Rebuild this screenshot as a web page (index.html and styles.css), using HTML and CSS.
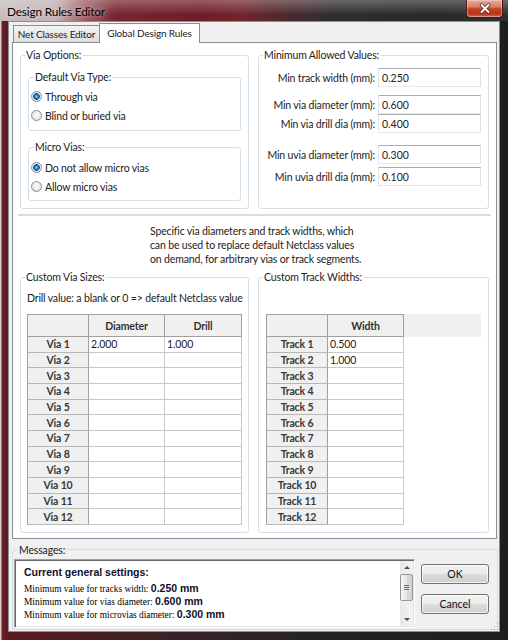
FILE: index.html
```html
<!DOCTYPE html>
<html>
<head>
  <title>Design Rules Editor</title>
  <link rel="stylesheet" href="styles.css">
</head>
<body>
  <div class="window">
    <div class="titlebar">
      <span class="title">Design Rules Editor</span>
      <span class="close">
        <svg width="14" height="11" viewBox="0 0 14 11">
          <path d="M3.5 2 L10.5 9 M10.5 2 L3.5 9" stroke="#5a2418" stroke-width="3.4" stroke-linecap="round"/>
          <path d="M3.5 2 L10.5 9 M10.5 2 L3.5 9" stroke="#fff" stroke-width="1.9" stroke-linecap="round"/>
        </svg>
      </span>
    </div>

    <div class="client">
      <div class="tabs">
        <span class="tab">Net Classes Editor</span>
        <span class="tab active">Global Design Rules</span>
      </div>

      <div class="panel">
        <div class="row">
          <fieldset class="group via-options">
            <legend>Via Options:</legend>
            <fieldset class="group sub default-type">
              <legend>Default Via Type:</legend>
              <div class="radio"><span class="dot checked"></span>Through via</div>
              <div class="radio"><span class="dot"></span>Blind or buried via</div>
            </fieldset>
            <fieldset class="group sub micro">
              <legend>Micro Vias:</legend>
              <div class="radio"><span class="dot checked"></span>Do not allow micro vias</div>
              <div class="radio"><span class="dot"></span>Allow micro vias</div>
            </fieldset>
          </fieldset>

          <fieldset class="group min-values">
            <legend>Minimum Allowed Values:</legend>
            <div class="field f1"><label>Min track width (mm):</label><input type="text" value="0.250"></div>
            <div class="field f2"><label>Min via diameter (mm):</label><input type="text" value="0.600"></div>
            <div class="field f3"><label>Min via drill dia (mm):</label><input type="text" value="0.400"></div>
            <div class="field f4"><label>Min uvia diameter (mm):</label><input type="text" value="0.300"></div>
            <div class="field f5"><label>Min uvia drill dia (mm):</label><input type="text" value="0.100"></div>
          </fieldset>
        </div>

        <div class="separator"></div>

        <p class="note">Specific via diameters and track widths, which<br>can be used to replace default Netclass values<br>on demand, for arbitrary vias or track segments.</p>

        <div class="row bottom">
          <fieldset class="group via-sizes">
            <legend>Custom Via Sizes:</legend>
            <p class="hint">Drill value: a blank or 0 =&gt; default Netclass value</p>
            <table class="grid via-grid">
              <thead>
                <tr><th class="c-label"></th><th class="c-diam">Diameter</th><th class="c-drill">Drill</th></tr>
              </thead>
              <tbody>
                <tr><td class="label">Via 1</td><td>2.000</td><td>1.000</td></tr>
                <tr><td class="label">Via 2</td><td></td><td></td></tr>
                <tr><td class="label">Via 3</td><td></td><td></td></tr>
                <tr><td class="label">Via 4</td><td></td><td></td></tr>
                <tr><td class="label">Via 5</td><td></td><td></td></tr>
                <tr><td class="label">Via 6</td><td></td><td></td></tr>
                <tr><td class="label">Via 7</td><td></td><td></td></tr>
                <tr><td class="label">Via 8</td><td></td><td></td></tr>
                <tr><td class="label">Via 9</td><td></td><td></td></tr>
                <tr><td class="label">Via 10</td><td></td><td></td></tr>
                <tr><td class="label">Via 11</td><td></td><td></td></tr>
                <tr><td class="label">Via 12</td><td></td><td></td></tr>
              </tbody>
            </table>
          </fieldset>

          <fieldset class="group track-widths">
            <legend>Custom Track Widths:</legend>
            <table class="grid track-grid">
              <thead>
                <tr><th class="c-label"></th><th class="c-diam">Width</th><th class="filler"></th></tr>
              </thead>
              <tbody>
                <tr><td class="label">Track 1</td><td>0.500</td><td class="blank"></td></tr>
                <tr><td class="label">Track 2</td><td>1.000</td><td class="blank"></td></tr>
                <tr><td class="label">Track 3</td><td></td><td class="blank"></td></tr>
                <tr><td class="label">Track 4</td><td></td><td class="blank"></td></tr>
                <tr><td class="label">Track 5</td><td></td><td class="blank"></td></tr>
                <tr><td class="label">Track 6</td><td></td><td class="blank"></td></tr>
                <tr><td class="label">Track 7</td><td></td><td class="blank"></td></tr>
                <tr><td class="label">Track 8</td><td></td><td class="blank"></td></tr>
                <tr><td class="label">Track 9</td><td></td><td class="blank"></td></tr>
                <tr><td class="label">Track 10</td><td></td><td class="blank"></td></tr>
                <tr><td class="label">Track 11</td><td></td><td class="blank"></td></tr>
                <tr><td class="label">Track 12</td><td></td><td class="blank"></td></tr>
              </tbody>
            </table>
          </fieldset>
        </div>
      </div>

      <fieldset class="messages">
        <legend>Messages:</legend>
        <div class="msg-row">
          <div class="msg-box">
            <div class="msg-text">
              <p class="msg-head">Current general settings:</p>
              <p class="msg-line">Minimum value for tracks width: <b>0.250 mm</b></p>
              <p class="msg-line">Minimum value for vias diameter: <b>0.600 mm</b></p>
              <p class="msg-line">Minimum value for microvias diameter: <b>0.300 mm</b></p>
            </div>
            <div class="scrollbar">
              <span class="arrow up"></span>
              <span class="thumb"><i></i><i></i><i></i></span>
              <span class="arrow down"></span>
            </div>
          </div>
          <div class="buttons">
            <button class="btn">OK</button>
            <button class="btn">Cancel</button>
          </div>
        </div>
      </fieldset>
      <span class="grip"></span>
    </div>
  </div>
</body>
</html>
```

FILE: styles.css
```css
* {
  box-sizing: border-box;
}
body {
  margin: 0;
  font-family: Lato, "Open Sans", sans-serif;
  font-size: 10.5px;
  letter-spacing: -0.15px;
  color: #222;
}
p {
  margin: 0;
}

/* window frame */
.window {
  width: 508px;
  height: 640px;
  display: flex;
  flex-direction: column;
  background: linear-gradient(to right, #d8cdce 0, #d8cdce 1px, #6e1f26 2px, #5a1a20 8px, #3c2225 150px, #242325 320px, #1d1e20 508px);
}
.titlebar {
  height: 21px;
  flex: none;
  display: flex;
  justify-content: space-between;
  align-items: flex-start;
  padding-left: 7px;
  background:
    linear-gradient(to bottom, rgba(255,255,255,.28), rgba(255,255,255,0) 70%),
    linear-gradient(to right, #c9bcbe 0, #c2b0b2 55px, #9c5a60 85px, #76262e 115px, #6e1e26 200px, #73252b 240px, #4c2a2e 285px, #2f2e30 335px, #27292b 440px, #2e3134 508px);
}
.title {
  font-size: 11.8px;
  line-height: 24px;
  color: #000;
  text-shadow: 0 0 5px rgba(255,255,255,.8);
}
.close {
  width: 37px;
  height: 18px;
  margin-right: 5px;
  display: flex;
  justify-content: center;
  align-items: center;
  border: 1px solid #4a1c14;
  border-top: 0;
  border-radius: 0 0 4px 4px;
  background: linear-gradient(#eaa99b 0, #d98068 40%, #c4401f 52%, #b8361a 80%, #d46650 100%);
  box-shadow: inset 0 0 0 1px rgba(255,255,255,.35);
}

.client {
  flex: 1;
  margin: 0 8px 8px;
  border: 1px solid #8a8f96;
  background: #f0f0f0;
  display: flex;
  flex-direction: column;
  position: relative;
}

/* tabs */
.tabs {
  height: 20px;
  flex: none;
  display: flex;
  align-items: flex-end;
  padding: 1px 0 0 4px;
  font-size: 10px;
}
.tab {
  height: 17px;
  width: 87px;
  border: 1px solid #898c95;
  border-bottom: 0;
  background: linear-gradient(#f3f3f3, #e9e9e9 50%, #dedede);
  text-align: center;
  line-height: 16px;
  white-space: nowrap;
}
.tab.active {
  height: 20px;
  width: 101px;
  margin-left: -1px;
  margin-bottom: -1px;
  background: #fff;
  line-height: 18px;
  position: relative;
  z-index: 1;
}

.panel {
  flex: none;
  margin: 0 2px 0 3px;
  border: 1px solid #898c95;
  background: #fff;
  padding: 5px 7px;
}
.row {
  display: flex;
  gap: 9px;
}
.row.bottom {
  margin-top: 4px;
}

/* group boxes */
.group {
  margin: 0;
  min-width: 0;
  padding: 0 7px 7px;
  border: 1px solid #d5dfe5;
  border-radius: 3px;
}
.group legend {
  padding: 0 1px;
  margin-left: -3px;
  line-height: 14px;
}
.via-options,
.via-sizes {
  width: 229px;
  flex: none;
}
.via-options {
  padding-top: 8px;
}
.min-values,
.track-widths {
  width: 231px;
  flex: none;
}
.sub {
  padding: 3px 2px 5px;
}
.sub legend {
  margin-left: 3px;
}
.sub.micro {
  margin-top: 9px;
  padding: 4px 2px 4px;
}

.radio {
  height: 19px;
  display: flex;
  align-items: center;
  gap: 3px;
}
.dot {
  width: 11px;
  height: 11px;
  border-radius: 50%;
  border: 1px solid #8f9093;
  background: radial-gradient(circle at 50% 45%, #fcfcfc 0, #eeeeee 45%, #d2d2d2 100%);
}
.dot.checked {
  background: radial-gradient(circle at 50% 50%, #7fd0ff 0, #2b86d6 1.5px, #0d4f96 3px, #dcdcdc 3.6px, #f6f6f6 5px);
}

/* minimum values */
.min-values {
  padding-top: 6px;
}
.field {
  height: 19px;
  display: flex;
  justify-content: flex-end;
  align-items: center;
  gap: 3px;
  white-space: nowrap;
}
.field.f2 { margin-top: 8px; }
.field.f4 { margin-top: 12px; }
.field.f5 { margin-top: 3px; }
.field input {
  width: 103px;
  height: 19px;
  margin: 0;
  padding: 0 3px;
  font: inherit;
  color: #222;
  border: 1px solid;
  border-color: #abadb3 #dbdfe6 #e3e9ef #e2e3ea;
  outline: 0;
}

.separator {
  height: 2px;
  margin: 5px -2px 0;
  background: #dcdcdc;
}
.note {
  margin: 8px 0 0 130px;
  line-height: 14px;
}

/* grids */
.hint {
  padding-top: 7px;
  margin: 0 0 9px -1px;
  line-height: 14px;
  white-space: nowrap;
}
.track-widths .grid {
  margin-top: 30px;
}
.grid {
  border-collapse: separate;
  border-spacing: 0;
  table-layout: fixed;
  width: 215px;
}
.via-grid {
  margin-left: -1px;
}
.c-label { width: 62px; }
.c-diam { width: 76px; }
.c-drill { width: 77px; }
.grid thead tr {
  height: 23px;
}
.grid tbody tr {
  height: 15.67px;
}
.grid th {
  padding: 0;
  background: #f0f0f0;
  border-top: 1px solid #a0a0a0;
  border-right: 1px solid #a0a0a0;
  border-bottom: 1px solid #a0a0a0;
  font-weight: bold;
  color: #333;
}
.grid th:first-child,
.grid td.label {
  border-left: 1px solid #a0a0a0;
}
.grid td {
  padding: 0 2px;
  line-height: 12px;
  border-right: 1px solid #c8c8c8;
  border-bottom: 1px solid #c8c8c8;
}
.grid td.label {
  background: #f0f0f0;
  text-align: center;
  font-weight: bold;
  color: #383838;
  border-right-color: #a0a0a0;
  border-bottom-color: #b8b8b8;
}
.grid th.filler {
  border: 0;
}
.grid td.blank {
  border: 0;
  background: transparent;
}

/* messages */
.messages {
  margin: 4px 1px 0 3px;
  padding: 2px 7px 1px 1px;
  border: 1px solid #d5dfe5;
  border-radius: 3px;
  min-width: 0;
}
.messages legend {
  padding: 0 1px;
  margin-left: 4px;
  line-height: 14px;
}
.msg-row {
  display: flex;
  gap: 6px;
}
.msg-box {
  width: 401px;
  height: 69px;
  display: flex;
  background: #fff;
  border: 1px solid;
  border-color: #a0a0a0 #fff #fff #a0a0a0;
  box-shadow: inset 1px 1px 0 #696969, inset -1px -1px 0 #e3e3e3;
}
.msg-text {
  flex: 1;
  padding: 5px 0 0 9px;
  color: #000;
  letter-spacing: 0;
}
.msg-head {
  font: bold 10.5px/14px "Liberation Sans", Arial, sans-serif;
  color: #10102a;
  margin-bottom: 3px;
}
.msg-line {
  font: 9.4px/12px "Liberation Serif", "Times New Roman", serif;
}
.msg-line b {
  font: bold 10.5px "Liberation Sans", Arial, sans-serif;
  color: #10102a;
}
.scrollbar {
  width: 13px;
  margin: 1px 1px 1px 0;
  display: flex;
  flex-direction: column;
  align-items: center;
  background: linear-gradient(to right, #e8e8e8, #f4f4f4);
}
.arrow {
  width: 0;
  height: 0;
  margin-top: 5px;
  border-left: 3px solid transparent;
  border-right: 3px solid transparent;
  border-bottom: 3px solid #505050;
}
.arrow.down {
  margin: auto 0 5px;
  border-bottom: 0;
  border-top: 3px solid #505050;
}
.thumb {
  width: 13px;
  height: 27px;
  margin-top: 5px;
  border: 1px solid #979797;
  border-radius: 2px;
  background: linear-gradient(to right, #f5f5f5, #e6e6e6 50%, #d9d9d9 50%, #d2d2d2);
  display: flex;
  flex-direction: column;
  justify-content: center;
  align-items: center;
  gap: 1px;
}
.thumb i {
  width: 5px;
  height: 1px;
  background: #6a6a6a;
}
.buttons {
  display: flex;
  flex-direction: column;
  gap: 10px;
  padding-top: 5px;
}
.btn {
  width: 68px;
  height: 20px;
  margin: 0;
  padding: 0;
  font: inherit;
  font-size: 10.5px;
  color: #111;
  border: 1px solid #707070;
  border-radius: 3px;
  background: linear-gradient(#f2f2f2 0, #ebebeb 50%, #dddddd 50%, #cfcfcf 100%);
  box-shadow: inset 0 0 0 1px rgba(255,255,255,.75);
}
.grip {
  position: absolute;
  right: 1px;
  bottom: 1px;
  width: 8px;
  height: 8px;
  background: radial-gradient(circle, #a8a8a8 0.6px, transparent 1px) 0 0 / 3px 3px;
  clip-path: polygon(100% 0, 100% 100%, 0 100%);
}
```
